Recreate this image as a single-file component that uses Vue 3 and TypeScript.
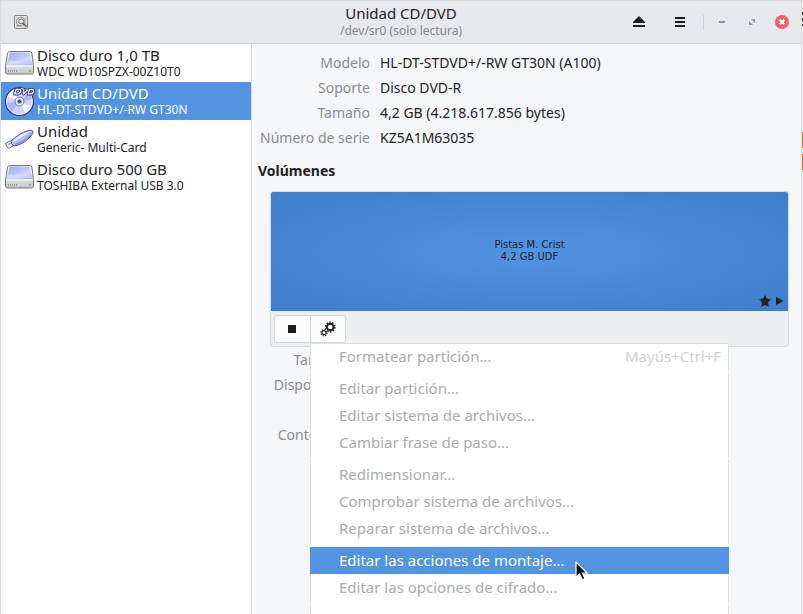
<script setup lang="ts">
import { ref } from 'vue'

type DriveKind = 'disk' | 'dvd' | 'usb'

interface Drive {
  kind: DriveKind
  name: string
  model: string
}

interface MenuEntry {
  label: string
  shortcut?: string
  enabled?: boolean
}

const drives: Drive[] = [
  { kind: 'disk', name: 'Disco duro 1,0 TB', model: 'WDC WD10SPZX-00Z10T0' },
  { kind: 'dvd', name: 'Unidad CD/DVD', model: 'HL-DT-STDVD+/-RW GT30N' },
  { kind: 'usb', name: 'Unidad', model: 'Generic- Multi-Card' },
  { kind: 'disk', name: 'Disco duro 500 GB', model: 'TOSHIBA External USB 3.0' },
]
const selected = ref(1)

const details: [string, string][] = [
  ['Modelo', 'HL-DT-STDVD+/-RW GT30N (A100)'],
  ['Soporte', 'Disco DVD-R'],
  ['Tamaño', '4,2 GB (4.218.617.856 bytes)'],
  ['Número de serie', 'KZ5A1M63035'],
]

const volumeLabels = ['Tamaño', 'Dispositivo', 'Contenido']

const menuGroups: MenuEntry[][] = [
  [{ label: 'Formatear partición…', shortcut: 'Mayús+Ctrl+F' }],
  [
    { label: 'Editar partición…' },
    { label: 'Editar sistema de archivos…' },
    { label: 'Cambiar frase de paso…' },
  ],
  [
    { label: 'Redimensionar…' },
    { label: 'Comprobar sistema de archivos…' },
    { label: 'Reparar sistema de archivos…' },
  ],
  [
    { label: 'Editar las acciones de montaje…', enabled: true },
    { label: 'Editar las opciones de cifrado…' },
  ],
  [{ label: 'Crear imagen de partición…', enabled: true }],
]
const activeLabel = ref('Editar las acciones de montaje…')

function hover(entry: MenuEntry) {
  if (entry.enabled) activeLabel.value = entry.label
}
</script>

<template>
  <div class="desktop">
    <div class="window">
      <header class="titlebar">
        <div class="start">
          <svg class="app-icon" width="16" height="16" viewBox="0 0 16 16" aria-hidden="true">
            <rect x="1.500" y="1.500" width="13" height="13" rx="1.500" fill="#c9cac7" stroke="#83857c" />
            <rect x="2.600" y="2.600" width="10.600" height="10.600" fill="none" stroke="#f1f1ef" stroke-width=".8" />
            <circle cx="7.600" cy="7.600" r="4.200" fill="#dcdedb" stroke="#91938d" stroke-width=".8" />
            <circle cx="8.200" cy="7.400" r="2.500" fill="#eceeed" stroke="#666861" stroke-width=".9" />
            <path d="M10 9.200l3.500 3.600" stroke="#5d5f58" stroke-width="1.400" />
            <path d="M3.500 11.800h4" stroke="#777" stroke-width=".7" />
          </svg>
        </div>
        <div class="heading">
          <h1>Unidad CD/DVD</h1>
          <p>/dev/sr0 (solo lectura)</p>
        </div>
        <div class="end">
          <button class="tool" aria-label="Expulsar">
            <svg width="12" height="12" viewBox="0 0 12 12"><path d="M6 0l6 6v1H0V6zM0 9h12v2H0z" fill="#1d1d1f" /></svg>
          </button>
          <button class="tool" aria-label="Menú">
            <svg width="10" height="12" viewBox="0 0 10 12"><path d="M0 1h10v2H0zM0 5h10v2H0zM0 9h10v2H0z" fill="#1d1d1f" /></svg>
          </button>
          <span class="rule"></span>
          <button class="win" aria-label="Minimizar">
            <svg width="6" height="2" viewBox="0 0 6 2"><path d="M0 0h6v2H0z" fill="#9092a0" /></svg>
          </button>
          <button class="win" aria-label="Restaurar">
            <svg width="6" height="6" viewBox="0 0 6 6"><path d="M2 0H6v4zM0 2L4 6H0z" fill="#9092a0" /></svg>
          </button>
          <button class="win" aria-label="Cerrar">
            <svg width="14" height="14" viewBox="0 0 14 14">
              <circle cx="7" cy="7" r="7" fill="#f2606a" />
              <path d="M4.700 4.700l4.600 4.600M9.300 4.700l-4.600 4.600" stroke="#fff" stroke-width="2.200" />
            </svg>
          </button>
        </div>
      </header>

      <div class="body">
        <nav class="drives" aria-label="Dispositivos">
          <button
            v-for="(drive, i) in drives"
            :key="drive.name"
            class="drive"
            :class="{ selected: i === selected }"
            @click="selected = i"
          >
            <svg v-if="drive.kind === 'disk'" width="32" height="32" viewBox="0 1 32 32">
              <defs>
                <linearGradient id="disk-top" x1="0" y1="0" x2="1" y2="1">
                  <stop offset="0" stop-color="#9aa4ee" />
                  <stop offset=".55" stop-color="#c5cdfa" />
                  <stop offset="1" stop-color="#8f9ae8" />
                </linearGradient>
                <linearGradient id="disk-front" x1="0" y1="0" x2="0" y2="1">
                  <stop offset="0" stop-color="#fafafa" />
                  <stop offset="1" stop-color="#c9c9c9" />
                </linearGradient>
              </defs>
              <path d="M5.500 5.500h20.500q1.500 0 1.800 1.500l1.700 12.500v6.500q0 2-2 2H3.500q-2 0-2-2v-6.500L3.700 7q.3-1.500 1.800-1.500z" fill="url(#disk-front)" stroke="#77777b" />
              <path d="M5.800 6.500h20l2.200 12.500H3.200z" fill="url(#disk-top)" />
              <path d="M5 14q10 4 21.500-5l1.300 9.500H3.500z" fill="#e4e9ff" opacity=".55" />
              <path d="M2.500 20h26.500" stroke="#fff" />
              <path d="M4.500 24v2M6.500 24v2M8.500 24v2M10.500 24v2M12.500 24v2" stroke="#999" />
              <circle cx="26" cy="25" r="1.100" fill="#76c44b" />
            </svg>
            <svg v-else-if="drive.kind === 'dvd'" width="32" height="32" viewBox="0 0 32 32">
              <circle cx="15.500" cy="16.500" r="14" fill="#cfd3fa" stroke="#30327c" stroke-width="1.200" />
              <circle cx="15.500" cy="16.500" r="12.800" fill="none" stroke="#f4f5ff" />
              <path d="M15.500 16.500L4 12A13 13 0 0 1 10 5zM15.500 16.500l11.500 5a13 13 0 0 1-6 6z" fill="#fff" opacity=".75" />
              <path d="M15.500 16.500L3 18a13 13 0 0 0 5 9zM15.500 16.500L28 14a13 13 0 0 0-3-6z" fill="#9da4ee" opacity=".65" />
              <circle cx="15.500" cy="16.500" r="4.500" fill="#e8eaff" stroke="#6d74c6" />
              <circle cx="15.500" cy="16.500" r="2" fill="#383a78" stroke="#9fa6df" />
              <g fill="none" stroke-linejoin="round">
                <path d="M12 4.500h3q2.200 0 1.600 2.200t-3 2.200h-3zM19.500 4.500l.3 4.400 3.700-4.400M25.500 4.500h2.500q2.200 0 1.600 2.200t-3 2.200h-2.500z" stroke="#272a75" stroke-width="3" />
                <path d="M12 4.500h3q2.200 0 1.600 2.200t-3 2.200h-3zM19.500 4.500l.3 4.400 3.700-4.400M25.500 4.500h2.500q2.200 0 1.600 2.200t-3 2.200h-2.500z" stroke="#fff" stroke-width="1.300" />
              </g>
            </svg>
            <svg v-else width="32" height="32" viewBox="0 0 32 32">
              <path d="M1.500 20.500l5-3 3.500 4.500-4.500 3q-1.500.5-2.500-1z" fill="#eee" stroke="#777" />
              <path d="M7 18.200C12 13 19 8.500 26 7.200q4-.2 2.600 3.300C26 15.500 18 22 10 23q-3-1.500-3-4.800z" fill="#b9bff1" stroke="#4d509c" />
              <path d="M8.500 18.500C14 13.500 19 10 26 8.600q-4.500 3.500-8.500 5.500t-9 5.800z" fill="#eef0ff" />
              <path d="M10.500 21.500C17.500 20 24 15.500 27.500 10.500" fill="none" stroke="#858cd8" stroke-width="1.400" />
              <path d="M4.500 21.500l2-1" stroke="#666" />
            </svg>
            <span class="drive-text">
              <span class="name">{{ drive.name }}</span>
              <span class="model">{{ drive.model }}</span>
            </span>
          </button>
        </nav>

        <main class="content">
          <dl class="details">
            <template v-for="[term, value] in details" :key="term">
              <dt>{{ term }}</dt>
              <dd>{{ value }}</dd>
            </template>
          </dl>

          <h2>Volúmenes</h2>

          <section class="volumes">
            <div class="volume">
              <p>Pistas M. Crist<br />4,2 GB UDF</p>
              <div class="marks">
                <svg width="12" height="12" viewBox="0 0 12 12"><path d="M6 0l1.800 3.600 4.200.7-3 3 .7 4.500L6 9.900l-3.700 1.900.7-4.500-3-3 4.200-.7z" fill="#222" /></svg>
                <svg width="8" height="8" viewBox="0 0 8 8"><path d="M0 0l7.500 4L0 8z" fill="#222" /></svg>
              </div>
            </div>
            <div class="toolbar">
              <button class="action first" aria-label="Desmontar">
                <svg width="8" height="8" viewBox="0 0 8 8"><path d="M0 0h8v8H0z" fill="#1c1c1e" /></svg>
              </button>
              <div class="menu-anchor">
                <button class="action last" aria-label="Opciones de partición" aria-haspopup="menu" aria-expanded="true">
                  <svg width="16" height="16" viewBox="0 0 16 16" fill="none" stroke="#222">
                    <circle cx="10.200" cy="6" r="3.300" stroke-width="2" />
                    <circle cx="10.200" cy="6" r="4.700" stroke-width="1.500" stroke-dasharray="1.500 1.450" />
                    <circle cx="4" cy="11.700" r="2" stroke-width="1.200" />
                    <circle cx="4" cy="11.700" r="3.100" stroke-width="1.200" stroke-dasharray="1.200 1.240" />
                  </svg>
                </button>
                <div class="menu" role="menu">
                  <template v-for="(group, g) in menuGroups" :key="g">
                    <hr v-if="g > 0" />
                    <button
                      v-for="entry in group"
                      :key="entry.label"
                      class="entry"
                      :class="{ enabled: entry.enabled, active: entry.label === activeLabel }"
                      role="menuitem"
                      :disabled="!entry.enabled"
                      @mouseenter="hover(entry)"
                    >
                      <span>{{ entry.label }}</span>
                      <kbd v-if="entry.shortcut">{{ entry.shortcut }}</kbd>
                    </button>
                  </template>
                </div>
              </div>
            </div>
          </section>

          <dl class="volume-details">
            <dt v-for="label in volumeLabels" :key="label">{{ label }}</dt>
          </dl>
        </main>
      </div>
    </div>

    <aside class="behind">
      <span class="dark"></span>
      <span class="orange"></span>
      <span class="orange"></span>
    </aside>

    <svg class="pointer" width="14" height="20" viewBox="0 0 14 20" aria-hidden="true">
      <path d="M1 1v15.500l3.600-3.400 2.600 5.700 2.800-1.300-2.600-5.500H12z" fill="#111" stroke="#fff" stroke-width="1.200" />
    </svg>
  </div>
</template>

<style>
body {
  margin: 0;
  overflow: hidden;
}
</style>

<style scoped>
.desktop {
  position: relative;
  display: flex;
  height: 100vh;
  overflow: hidden;
  background: #d5d6db;
  color: #222226;
  font: 15px/20px "Noto Sans", "Open Sans", sans-serif;
}
h1, h2, p, dl, dd { margin: 0; }
button {
  padding: 0;
  border: 0;
  background: none;
  color: inherit;
  font: inherit;
}
svg { display: block; }

.window {
  flex: 1;
  min-width: 0;
  display: flex;
  flex-direction: column;
  border: solid #dcdde1;
  border-width: 1px 1px 0;
  border-radius: 4px 4px 0 0;
  background: #f5f6f8;
}
.titlebar {
  display: grid;
  grid-template-columns: 1fr auto 1fr;
  align-items: center;
  height: 42px;
  flex: none;
  border-bottom: 1px solid #d1d2d8;
  border-radius: 4px 4px 0 0;
  background: #e7e8eb;
}
.start { padding-left: 12px; }
.heading { padding-bottom: 2px; text-align: center; }
h1 { font-size: 15px; line-height: 20px; font-weight: 400; }
.heading p { color: #85868a; font-size: 12px; line-height: 16px; }
.end {
  display: flex;
  justify-content: flex-end;
  align-items: center;
  padding-right: 4px;
}
.tool, .win {
  display: flex;
  justify-content: center;
  align-items: center;
  height: 30px;
}
.tool { width: 36px; margin-right: 5px; }
.win { width: 30px; }
.rule { width: 1px; height: 15px; margin-right: 3px; background: #cfd0d6; }

.body { flex: 1; min-height: 0; display: flex; }
.drives {
  width: 250px;
  flex: none;
  border-right: 1px solid #dcdde1;
  background: #fff;
}
.drive {
  display: flex;
  align-items: center;
  gap: 1px;
  width: 100%;
  height: 38px;
  padding-left: 3px;
  text-align: left;
}
.drive.selected { background: #5294e2; color: #fff; }
.drive-text { display: flex; flex-direction: column; white-space: nowrap; }
.name { line-height: 18px; }
.model { font-size: 12px; line-height: 16px; }

.content { flex: 1; min-width: 0; padding: 6px 12px 0 6px; }
.details {
  display: grid;
  grid-template-columns: 112px 1fr;
  column-gap: 10px;
  font-size: 14px;
  line-height: 25px;
  white-space: nowrap;
}
dt { color: #8b8c8f; text-align: right; }
h2 { margin: 11px 0 10px; font-size: 14px; line-height: 20px; }

.volumes {
  margin-left: 12px;
  border: 1px solid #d9dbdf;
  border-radius: 3px;
  background: #edeef0;
}
.volume {
  position: relative;
  display: flex;
  justify-content: center;
  align-items: center;
  box-sizing: border-box;
  height: 119px;
  padding-bottom: 2px;
  border-radius: 2px 2px 0 0;
  background: radial-gradient(ellipse farthest-corner, #5294e2, #3d7dcb);
  text-align: center;
  font: 10px/12px "DejaVu Sans", sans-serif;
}
.marks {
  position: absolute;
  right: 4px;
  bottom: 4px;
  display: flex;
  align-items: center;
  gap: 5px;
}
.toolbar { display: flex; padding: 4px 3px 3px; }
.action {
  display: flex;
  justify-content: center;
  align-items: center;
  width: 36px;
  height: 28px;
  border: 1px solid #cfd6e6;
  background: #fcfcfc;
}
.first { padding-right: 1px; border-right: 0; border-radius: 3px 0 0 3px; }
.last { border-radius: 0 3px 3px 0; }
.menu-anchor { position: relative; }
.menu {
  position: absolute;
  top: 100%;
  left: 0;
  z-index: 2;
  box-sizing: border-box;
  width: 419px;
  border: solid #dcdfe3;
  border-width: 0 1px;
  background: #fff;
  box-shadow: inset 0 1px #dcdfe3;
}
.entry {
  display: flex;
  justify-content: space-between;
  align-items: center;
  box-sizing: border-box;
  width: 100%;
  height: 27px;
  padding: 0 7px 2px 28px;
  color: #a9abaf;
  white-space: nowrap;
}
.entry kbd { color: #d0d1d5; font: inherit; }
.entry.enabled { color: #222226; }
.entry.active {
  width: auto;
  min-width: calc(100% + 2px);
  margin: 0 -1px;
  padding: 0 8px 2px 29px;
  background: #5294e2;
  color: #fff;
}
hr { height: 1px; margin: 2px -1px; border: 0; background: #fff; }

.volume-details { display: grid; width: 88px; font-size: 14px; line-height: 25px; }
.volume-details dt:nth-child(2) { padding-bottom: 25px; }

.behind {
  display: flex;
  flex-direction: column;
  width: 1px;
  flex: none;
  background: #f0f0f2;
}
.dark { height: 14px; margin: 12px 0 106px; background: repeating-linear-gradient(#333 0 3px, #dddddf 3px 6px); }
.orange { height: 16px; margin-bottom: 6px; background: #f36b3b; }

.pointer { position: absolute; left: 575px; top: 561px; z-index: 3; }
</style>
